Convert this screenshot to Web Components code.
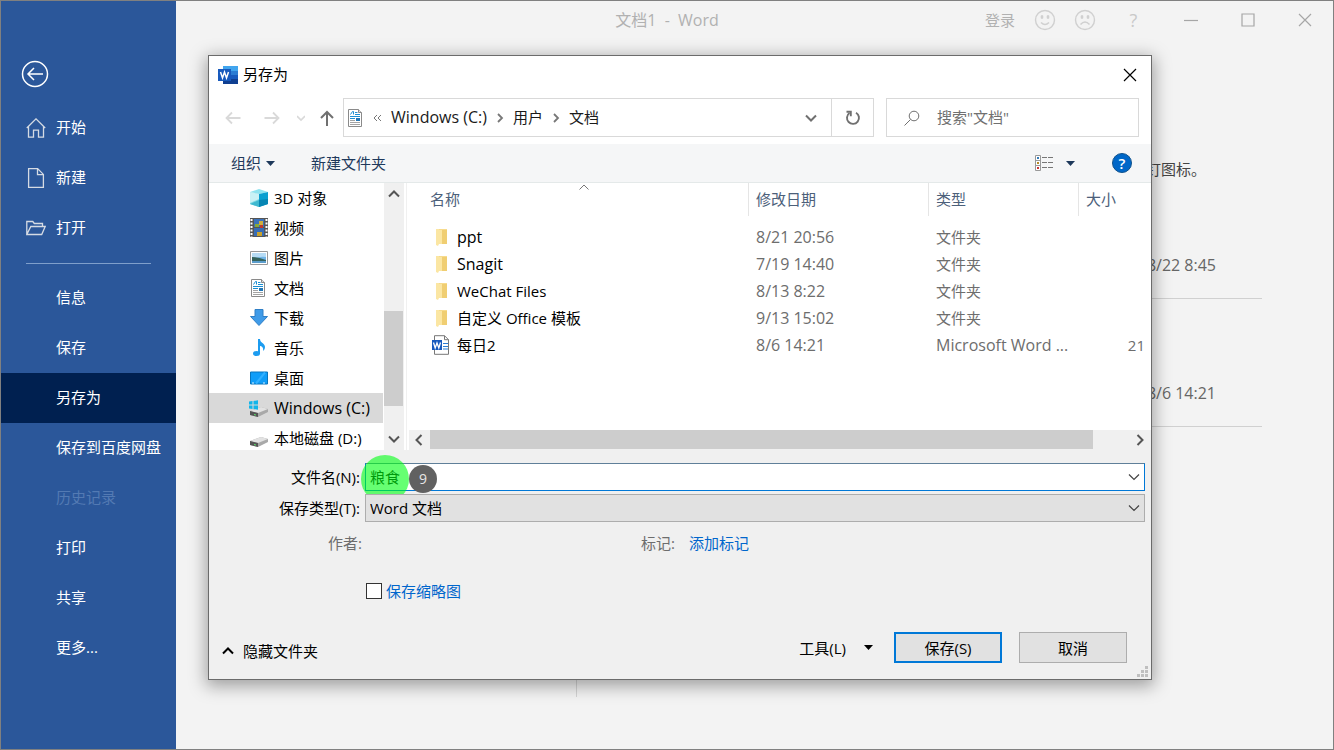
<!DOCTYPE html>
<html lang="zh-CN">
<head>
<meta charset="utf-8">
<title>文档1 - Word</title>
<style>
html, body { margin: 0; height: 100%; }
body { font: 15px/20px "Open Sans", "Noto Sans CJK SC", sans-serif; color: #000; overflow: hidden; }
</style>
</head>
<body>
<word-window></word-window>
<script>
const BASE = `<style>
*{box-sizing:border-box}
button,input,select{font:inherit;color:inherit;background:none;border:0;margin:0;padding:0;border-radius:0;outline:0;text-align:left}
a{color:inherit;text-decoration:none}
ul{list-style:none;margin:0;padding:0}
.latin{font-size:16px}
</style>`;

function define(name, css, html) {
  const template = document.createElement('template');
  template.innerHTML = `${BASE}<style>${css}</style>${html}`;
  customElements.define(name, class extends HTMLElement {
    constructor() {
      super();
      this.attachShadow({ mode: 'open' }).append(template.content.cloneNode(true));
    }
  });
}

const stroke = (d, w = 1, extra = '') => `<path d="${d}" fill="none" stroke="currentColor" stroke-width="${w}" ${extra}/>`;
const DOC = `<path d="M2.500 1.500h10l3 3v14h-13z" fill="#fff" stroke="#8a8a8a"/><path d="M12.500 1.500v3h3" fill="#ddd" stroke="#8a8a8a"/><path d="M4.500 6.500l2-3h1v3M9 4.500h2.500M9 6.500h5M4 8.500h10" stroke="#1b8fd2" fill="none"/><path d="M4 10.500h5" stroke="#1b8fd2"/><path d="M4 12.500h5M4 14.500h10M4 16.500h10" stroke="#a4a4a4"/><path d="M10 10h4v3h-4z" fill="#2176b5"/>`;
const DRIVE = `<path d="M1 13l11-4 7 2v3L9 19l-8-2z" fill="#a9a9a9"/><path d="M1 13l11-4 7 2-10 4z" fill="#e2e2e2"/><path d="M1 13l8 2v4l-8-2z" fill="#555"/><path d="M5 16l2 .5v1L5 17z" fill="#5ee06a"/>`;
const ICONS = {
  back: [28, 28, `<circle cx="14" cy="14" r="12.500" fill="none" stroke="currentColor" stroke-width="1.500"/>` + stroke('M22 14H7.500M13 8l-6 6 6 6', 1.500)],
  home: [20, 20, stroke('M.8 10L10 .9 19.200 10M2.500 8.500v10.700h5v-7h5v7h5V8.500', 1.300)],
  page: [20, 20, stroke('M2.600.6h9l5.800 5.800v13H2.600zM11.500.6v6h6', 1.300)],
  open: [20, 20, stroke('M.8 16.500V3.500h6l1.500 2h8.200v3M.8 16.500l4-8h14.400l-3.500 8z', 1.300)],
  smile: [22, 22, `<circle cx="11" cy="11" r="9.500" fill="none" stroke="currentColor" stroke-width="1.400"/><ellipse cx="8" cy="8" rx="1.400" ry="2" fill="currentColor"/><ellipse cx="14" cy="8" rx="1.400" ry="2" fill="currentColor"/>` + stroke('M7 13.500q4 4 8 0', 1.500)],
  sad: [22, 22, `<circle cx="11" cy="11" r="9.500" fill="none" stroke="currentColor" stroke-width="1.400"/><ellipse cx="8" cy="8" rx="1.400" ry="2" fill="currentColor"/><ellipse cx="14" cy="8" rx="1.400" ry="2" fill="currentColor"/>` + stroke('M6.500 15.500q4.500-5 9 0', 1.500)],
  min: [14, 14, stroke('M0 7.500h14', 1.200)],
  max: [14, 14, stroke('M1 1h12v12H1z', 1.200)],
  close: [14, 14, stroke('M1 1l12 12M13 1L1 13', 1.200)],
  word: [20, 18, `<path d="M5 0h15v5H5z" fill="#41a5ee"/><path d="M5 5h15v4H5z" fill="#2b7cd3"/><path d="M5 9h15v4H5z" fill="#185abd"/><path d="M5 13h15v5H5z" fill="#103f91"/><path d="M0 3h13v12H0z" fill="#185abd"/><path d="M2.500 6l2 6 2-6 2 6 2-6" fill="none" stroke="#fff" stroke-width="1.500"/>`],
  left: [16, 14, stroke('M15.500 7H1.500M7 1.500L1.500 7 7 12.500', 1.800)],
  right: [16, 14, stroke('M.5 7h14M9 1.500L14.500 7 9 12.500', 1.800)],
  up: [14, 16, stroke('M7 16V2M1 8l6-6 6 6', 2)],
  smalldown: [8, 8, stroke('M0 2l4 4 4-4', 1.600)],
  crumb: [8, 10, stroke('M2 1l4 4-4 4', 1.800)],
  laquo: [10, 8, stroke('M5 1L2 4l3 3M9 1L6 4l3 3', 1)],
  chevron: [12, 8, stroke('M1 1.500l5 5 5-5', 2)],
  thin: [12, 8, stroke('M1 1.500l5 5 5-5', 1.200)],
  upchev: [12, 8, stroke('M1 6.500l5-5 5 5', 2)],
  sort: [10, 6, stroke('M.5 5.500L5 1l4.500 4.500', 1)],
  leftchev: [8, 12, stroke('M6.500 1l-5 5 5 5', 2)],
  rightchev: [8, 12, stroke('M1.500 1l5 5-5 5', 2)],
  refresh: [16, 16, stroke('M4.500 3A6 6 0 1 0 11 2.700', 1.900) + stroke('M1.500 1.700h4.300v4.600', 1.900)],
  search: [16, 16, `<circle cx="10" cy="6" r="4.800" fill="none" stroke="currentColor"/>` + stroke('M6.500 9.500L.5 15.500')],
  tri: [9, 5, `<path d="M0 0h9L4.500 5z" fill="currentColor"/>`],
  view: [18, 16, `<path d="M.5.5h5v15h-5zM.5 5.500h5M.5 10.500h5" fill="#fff" stroke="#999"/><path d="M2 2h2v2H2z" fill="#347bb8"/><path d="M2 7h2v2H2z" fill="#b58a25"/><path d="M2 12h2v2H2z" fill="#c33"/><path d="M7 2.500h5M13 2.500h5M7 7.500h5M13 7.500h5M7 12.500h5M13 12.500h5" stroke="#777"/>`],
  cube: [20, 20, `<path d="M1 4l9-3 9 3-9 2z" fill="#8fe3ef"/><path d="M1 4l9 2v13l-9-3z" fill="#7fd9e4"/><path d="M1 4l9 2v5l-9 4z" fill="#c9f1f5"/><path d="M10 6l9-2v12l-9 3z" fill="#0b9fd0"/><path d="M10 12l9-1v5l-9 3z" fill="#0786b4"/><path d="M1 16l9-4v7z" fill="#3fb9d0"/>`],
  film: [20, 20, `<path d="M1 0h18v19H1z" fill="#555"/><path d="M2.500 1v18M17.500 1v18" stroke="#fff" stroke-width="2" stroke-dasharray="2 1.500"/><path d="M5 1h10v8H5z" fill="#3b72ba"/><path d="M5 10h10v8H5z" fill="#376cb5"/><path d="M10 3h4v4h-4z" fill="#cfae3d"/><path d="M6 6h4v3H6z" fill="#88aa38"/><path d="M11 7h3v3h-3z" fill="#c0392b"/><path d="M8 14h5v4H8z" fill="#c8a12c"/>`],
  picture: [20, 20, `<path d="M1.500 3.500h17v13h-17z" fill="#fff" stroke="#999"/><path d="M3 5h14v10H3z" fill="#71b5e8"/><path d="M3 5h14v4q-6-1-14 2z" fill="#b7dcf5"/><path d="M3 9q6 0 14 3v1H3z" fill="#35635c"/><path d="M3 13h14v2H3z" fill="#5b9dcc"/>`],
  doc: [20, 20, DOC],
  download: [20, 20, `<path d="M6 1.500h8v7h4.500L10 17.500 1.500 8.500H6z" fill="#3f9be8" stroke="#2f7fc6"/>`],
  music: [20, 20, `<path d="M9 1h2c0 4 5 4 5 8 0 2-1 3-2 4 1-4-2-5-3-5v8H9z" fill="#1c9cf0"/><ellipse cx="7.500" cy="15.500" rx="3.500" ry="2.500" fill="#1c9cf0"/>`],
  desktop: [20, 20, `<path d="M1.500 4h17v12h-17z" fill="#109df8" stroke="#0875bd"/><path d="M7 15.500L16 4.500" stroke="#32b0ff" stroke-width="2"/><path d="M3 15h14" stroke="#d9f1ff" stroke-dasharray="2 9"/>`],
  drivec: [20, 20, DRIVE + `<path d="M0 3.500l3.500-.5v3.500H0zM4.500 3L9 2.300v4.200H4.500zM0 7.500h3.500V11L0 10.500zM4.500 7.500H9v4.200L4.500 11z" fill="#12b5ea"/>`],
  drive: [20, 20, DRIVE],
  folder: [14, 18, `<path d="M2 1h11v15H2z" fill="#f0ce72"/><path d="M2 1h6v15H5l-1 2-2-1z" fill="#fbe6a3"/><path d="M5 1h8v1H5z" fill="#f7db8d"/>`],
  docx: [20, 20, `<path d="M3.500.7h10l4 4v14.600h-14z" fill="#fff" stroke="#777"/><path d="M13.500.7v4h4" fill="none" stroke="#777"/><path d="M12 8.500h5M12 11.500h5M12 14h5" stroke="#2b7cd3"/><path d="M1 5h10v10H1z" fill="#185abd"/><path d="M2.500 7.500L4.200 13 6 8l1.800 5 1.700-5.500" fill="none" stroke="#fff" stroke-width="1.300"/>`],
  grip: [12, 12, `<path d="M8 0h3v3H8zM4 4h3v3H4zM8 4h3v3H8zM0 8h3v3H0zM4 8h3v3H4zM8 8h3v3H8z" fill="#bfbfbf"/>`]
};

customElements.define('ui-icon', class extends HTMLElement {
  connectedCallback() {
    const [w, h, body] = ICONS[this.getAttribute('name')];
    const root = this.shadowRoot || this.attachShadow({ mode: 'open' });
    root.innerHTML = `<style>:host{display:inline-flex;flex:none}svg{display:block}</style><svg width="${w}" height="${h}" viewBox="0 0 ${w} ${h}" aria-hidden="true">${body}</svg>`;
  }
});

define('side-item', `
:host{display:block}
a{display:flex;align-items:center;gap:10px;height:50px;padding-left:25px;color:#fff}
.icon{width:20px;display:flex;color:#d5dbe4}
.label{padding-bottom:2px}
:host([selected]) a{background:#002050}
:host([disabled]) a{color:#537ab3}`,
`<a href="#"><span class="icon"><slot name="icon"></slot></span><span class="label"><slot></slot></span></a>`);

define('side-bar', `
:host{display:block;background:#2b579a;color:#fff}
.back{display:flex;margin:59px 0 15px 20px;color:#fff}
hr{border:0;height:1px;background:#7f9fcb;margin:10px 25px 9px}`,
`<button class="back" aria-label="返回"><ui-icon name="back"></ui-icon></button>
<nav>
<side-item><ui-icon slot="icon" name="home"></ui-icon>开始</side-item>
<side-item><ui-icon slot="icon" name="page"></ui-icon>新建</side-item>
<side-item><ui-icon slot="icon" name="open"></ui-icon>打开</side-item>
<hr>
<side-item>信息</side-item>
<side-item>保存</side-item>
<side-item selected>另存为</side-item>
<side-item>保存到百度网盘</side-item>
<side-item disabled>历史记录</side-item>
<side-item>打印</side-item>
<side-item>共享</side-item>
<side-item>更多...</side-item>
</nav>`);

define('title-bar', `
:host{display:grid;grid-template-columns:1fr auto 1fr;align-items:center;height:38px;color:#b1b1b1}
.title{grid-column:2;white-space:pre}
.actions{display:flex;justify-content:flex-end;align-items:center}
button{display:flex;justify-content:center;align-items:center;height:38px}
.login{padding-right:10px}
.face{width:40px;color:#d0d0d0}
.win{width:57px;color:#a6a6a6}
.help{color:#c9c9c9;font-size:18px}`,
`<span class="title latin">文档1  -  Word</span>
<div class="actions">
<button class="login">登录</button>
<button class="face" aria-label="喜欢"><ui-icon name="smile"></ui-icon></button>
<button class="face" aria-label="不喜欢"><ui-icon name="sad"></ui-icon></button>
<button class="win help">?</button>
<button class="win" aria-label="最小化"><ui-icon name="min"></ui-icon></button>
<button class="win" aria-label="最大化"><ui-icon name="max"></ui-icon></button>
<button class="win" aria-label="关闭"><ui-icon name="close"></ui-icon></button>
</div>`);

define('recent-list', `
:host{display:grid;grid-template-columns:400px 1fr;padding-right:71px;color:#666}
.places{border-right:1px solid #d4d4d4;height:558px;margin-top:100px}
.hint{height:140px;display:flex;align-items:flex-end;justify-content:flex-end;padding-right:56px;color:#444}
.row{height:128px;border-bottom:1px solid #d0d0d0;display:flex;align-items:flex-end;justify-content:flex-end;padding:0 46px 23px 0}
.first{height:120px}`,
`<div class="places"></div>
<div><div class="hint">钉图标。</div>
<div class="row first latin">8/22 8:45</div>
<div class="row latin">8/6 14:21</div></div>`);

define('address-bar', `
:host{display:flex;align-items:center;padding:5px 12px 7px 16px;color:#707070}
button{display:flex;align-items:center;justify-content:center}
.off{color:#d9d9d9}
.history{display:flex;align-items:center;gap:23px;margin-right:9px}
.history button:last-child{margin-left:-8px}
.history button:nth-child(3){margin-left:-6px}
.path{flex:1;display:flex;height:39px;border:1px solid #d9d9d9;align-items:center;padding-left:2px;min-width:0}
.path nav{display:flex;align-items:center;gap:9px;flex:1;color:#1a1a1a}
nav button,input{padding-bottom:2px}
nav ui-icon{color:#777}
nav ui-icon[name=laquo]{margin-left:-3px}
.drop{width:40px;height:37px}
.refresh{width:42px;height:37px;border-left:1px solid #d9d9d9}
.search{display:flex;align-items:center;width:253px;height:39px;border:1px solid #d9d9d9;margin-left:12px;padding-left:17px;gap:17px}
input{flex:1;min-width:0}
input::placeholder{color:#707070;opacity:1}`,
`<div class="history">
<button class="off" aria-label="后退"><ui-icon name="left"></ui-icon></button>
<button class="off" aria-label="前进"><ui-icon name="right"></ui-icon></button>
<button class="off" aria-label="最近位置"><ui-icon name="smalldown"></ui-icon></button>
<button aria-label="上移"><ui-icon name="up"></ui-icon></button>
</div>
<div class="path">
<nav><ui-icon name="doc"></ui-icon><ui-icon name="laquo"></ui-icon><button class="latin">Windows (C:)</button><ui-icon name="crumb"></ui-icon><button>用户</button><ui-icon name="crumb"></ui-icon><button>文档</button></nav>
<button class="drop" aria-label="以前的位置"><ui-icon name="chevron"></ui-icon></button>
<button class="refresh" aria-label="刷新"><ui-icon name="refresh"></ui-icon></button>
</div>
<label class="search"><ui-icon name="search"></ui-icon><input type="text" placeholder='搜索"文档"' aria-label="搜索"></label>`);

define('command-bar', `
:host{display:flex;align-items:center;height:39px;padding:0 19px 0 22px;background:#f5f6f7;border-bottom:1px solid #e4e9e9;color:#1e395b}
button{display:flex;align-items:center;gap:5px}
.new{margin-left:36px;flex:1}
.view{gap:13px;margin-right:37px}
.help{width:20px;height:20px;border-radius:10px;background:#0067c8;border:1px solid #10528c;color:#fff;justify-content:center;font-weight:600}`,
`<button>组织<ui-icon name="tri"></ui-icon></button>
<button class="new">新建文件夹</button>
<button class="view" aria-label="更改视图"><ui-icon name="view"></ui-icon><ui-icon name="tri"></ui-icon></button>
<button class="help">?</button>`);

define('tree-item', `
:host{display:flex;align-items:center;gap:5px;height:30px;padding-left:40px;white-space:nowrap}
:host([selected]){background:#d9d9d9}
:host([latin]){font-size:16px}`,
`<slot name="icon"></slot><slot></slot>`);

define('folder-tree', `
:host{display:flex;width:198px;height:267px;border-right:1px solid #f0f0f0;overflow:hidden}
.items{width:174px;margin-right:1px}
.bar{width:20px;background:#f0f0f0;display:flex;flex-direction:column;align-items:center;color:#555}
.bar button{height:22px;padding-right:1px;display:flex;align-items:center}
.track{flex:1;align-self:stretch;display:flex;flex-direction:column;padding:106px 1px 22px 0}
.thumb{flex:1;background:#cdcdcd}`,
`<div class="items">
<tree-item><ui-icon slot="icon" name="cube"></ui-icon>3D 对象</tree-item>
<tree-item><ui-icon slot="icon" name="film"></ui-icon>视频</tree-item>
<tree-item><ui-icon slot="icon" name="picture"></ui-icon>图片</tree-item>
<tree-item><ui-icon slot="icon" name="doc"></ui-icon>文档</tree-item>
<tree-item><ui-icon slot="icon" name="download"></ui-icon>下载</tree-item>
<tree-item><ui-icon slot="icon" name="music"></ui-icon>音乐</tree-item>
<tree-item><ui-icon slot="icon" name="desktop"></ui-icon>桌面</tree-item>
<tree-item selected latin><ui-icon slot="icon" name="drivec"></ui-icon>Windows (C:)</tree-item>
<tree-item><ui-icon slot="icon" name="drive"></ui-icon>本地磁盘 (D:)</tree-item>
</div>
<div class="bar"><button aria-label="向上滚动"><ui-icon name="upchev"></ui-icon></button><div class="track"><div class="thumb"></div></div><button aria-label="向下滚动"><ui-icon name="chevron"></ui-icon></button></div>`);

define('file-list', `
:host{display:flex;flex-direction:column;flex:1;min-width:0;padding-left:2px}
table{border-collapse:separate;border-spacing:0;table-layout:fixed;width:100%;color:#6d6d6d}
th{font-weight:400;text-align:left;color:#4c607a;height:33px;padding:0 0 2px 7px;border-right:1px solid #e5e5e5;position:relative}
th:last-child{border-right:0}
th:first-child,td:first-child{padding-left:21px}
th ui-icon{position:absolute;left:50%;top:1px;color:#777}
tbody::before{content:"";display:block;height:8px}
td{height:27px;padding:0 0 2px 7px;white-space:nowrap}
td:last-child{text-align:right;padding-right:6px}
.name{display:flex;align-items:center;color:#000}
.name span{width:27px;display:flex;padding-left:4px}
.name .w{padding-left:1px}
.bar{margin-top:auto;height:20px;background:#f0f0f0;display:flex;align-items:center;color:#555}
.bar button{width:21px;height:20px;display:flex;align-items:center;justify-content:center;padding-right:2px}
.track{flex:1;align-self:stretch;padding:0 37px 1px 0;display:flex}
.thumb{flex:1;background:#cdcdcd}`,
`<table>
<colgroup><col><col style="width:180px"><col style="width:150px"><col style="width:72px"></colgroup>
<thead><tr><th>名称<ui-icon name="sort"></ui-icon></th><th>修改日期</th><th>类型</th><th>大小</th></tr></thead>
<tbody>
<tr><td><div class="name latin"><span><ui-icon name="folder"></ui-icon></span>ppt</div></td><td class="latin">8/21 20:56</td><td>文件夹</td><td></td></tr>
<tr><td><div class="name latin"><span><ui-icon name="folder"></ui-icon></span>Snagit</div></td><td class="latin">7/19 14:40</td><td>文件夹</td><td></td></tr>
<tr><td><div class="name"><span><ui-icon name="folder"></ui-icon></span>WeChat Files</div></td><td class="latin">8/13 8:22</td><td>文件夹</td><td></td></tr>
<tr><td><div class="name"><span><ui-icon name="folder"></ui-icon></span>自定义 Office 模板</div></td><td class="latin">9/13 15:02</td><td>文件夹</td><td></td></tr>
<tr><td><div class="name"><span class="w"><ui-icon name="docx"></ui-icon></span>每日2</div></td><td class="latin">8/6 14:21</td><td class="latin">Microsoft Word ...</td><td>21</td></tr>
</tbody></table>
<div class="bar"><button aria-label="向左滚动"><ui-icon name="leftchev"></ui-icon></button><div class="track"><div class="thumb"></div></div><button aria-label="向右滚动"><ui-icon name="rightchev"></ui-icon></button></div>`);

define('step-marker', `
:host{position:absolute;left:-4px;top:-8px;display:flex;align-items:center;pointer-events:none}
.spot{width:48px;height:48px;border-radius:24px;background:rgba(0,255,20,.6)}
.badge{width:28px;height:28px;border-radius:14px;background:#616161;color:#e6e6e6;font-size:14px;line-height:28px;text-align:center}`,
`<span class="spot"></span><span class="badge"><slot></slot></span>`);

define('save-form', `
:host{display:block;padding-top:13px}
.row{display:grid;grid-template-columns:156px 1fr;align-items:center;margin-bottom:3px;padding-right:6px}
.row>label{text-align:right;padding-right:5px}
.field{position:relative;display:flex;align-items:center;height:28px}
.field input,.field select{appearance:none;width:100%;height:28px;padding:0 24px 0 4px;background:#fff;border:1px solid #0078d7;border-top-color:#5f7f99}
.field input{padding-bottom:2px}
.field select{background:#e1e1e1;border-color:#adadad}
.arrow{position:absolute;right:5px;display:flex;pointer-events:none;color:#444}
.meta{display:grid;grid-template-columns:153px 279px 48px 1fr;height:22px;margin-top:11px;color:#6d6d6d}
.meta span:first-child{text-align:right}
a,.thumb{color:#0066cc}
.thumb{display:flex;align-items:center;gap:4px;margin:26px 0 0 157px;height:20px;width:max-content}
.thumb input{appearance:none;width:16px;height:16px;border:1px solid #333;background:#fff}`,
`<div class="row"><label for="name">文件名(N):</label><div class="field"><input id="name" type="text" value="粮食"><span class="arrow"><ui-icon name="thin"></ui-icon></span><step-marker>9</step-marker></div></div>
<div class="row"><label for="type">保存类型(T):</label><div class="field"><select id="type"><option>Word 文档</option></select><span class="arrow"><ui-icon name="thin"></ui-icon></span></div></div>
<div class="meta"><span>作者:</span><span></span><span>标记:</span><a href="#">添加标记</a></div>
<label class="thumb"><input type="checkbox">保存缩略图</label>`);

define('dialog-actions', `
:host{display:flex;align-items:center;padding:31px 24px 16px 13px;position:relative}
button{display:flex;align-items:center}
.hide{gap:9px;margin-top:6px;color:#000}
.tools{margin-left:auto;gap:18px;margin-right:21px}
.push{width:108px;height:31px;justify-content:center;background:#e1e1e1;border:1px solid #adadad}
.save{border:2px solid #0078d7;margin-right:17px}
.grip{position:absolute;right:2px;bottom:1px;display:flex}`,
`<button class="hide"><ui-icon name="upchev"></ui-icon>隐藏文件夹</button>
<button class="tools">工具(L)<ui-icon name="tri"></ui-icon></button>
<button class="push save">保存(S)</button>
<button class="push">取消</button>
<span class="grip"><ui-icon name="grip"></ui-icon></span>`);

define('save-dialog', `
:host{display:block;background:#f0f0f0;border:1px solid #6b6b6b;box-shadow:0 4px 16px 2px rgba(0,0,0,.35)}
.top,.body{background:#fff}
header{display:flex;align-items:center;height:37px;padding:0 14px 0 9px;gap:5px}
header h1{font:inherit;margin:0;flex:1;padding-bottom:2px}
header button{display:flex}
.body{display:flex}`,
`<div class="top"><header><ui-icon name="word"></ui-icon><h1>另存为</h1><button aria-label="关闭"><ui-icon name="close"></ui-icon></button></header>
<address-bar></address-bar></div>
<command-bar></command-bar>
<div class="body"><folder-tree></folder-tree><file-list></file-list></div>
<save-form></save-form>
<dialog-actions></dialog-actions>`);

define('word-window', `
:host{display:grid;grid-template-columns:176px 1fr;position:relative;min-height:100vh;background:#f3f3f3;border:1px solid #808080;box-sizing:border-box;overflow:hidden}
side-bar{margin-right:1px}
main{min-width:0}
title-bar{margin-left:-176px}
save-dialog{position:absolute;left:207px;right:181px;top:54px}`,
`<side-bar></side-bar>
<main><title-bar></title-bar><recent-list></recent-list></main>
<save-dialog></save-dialog>`);
</script>
</body>
</html>
